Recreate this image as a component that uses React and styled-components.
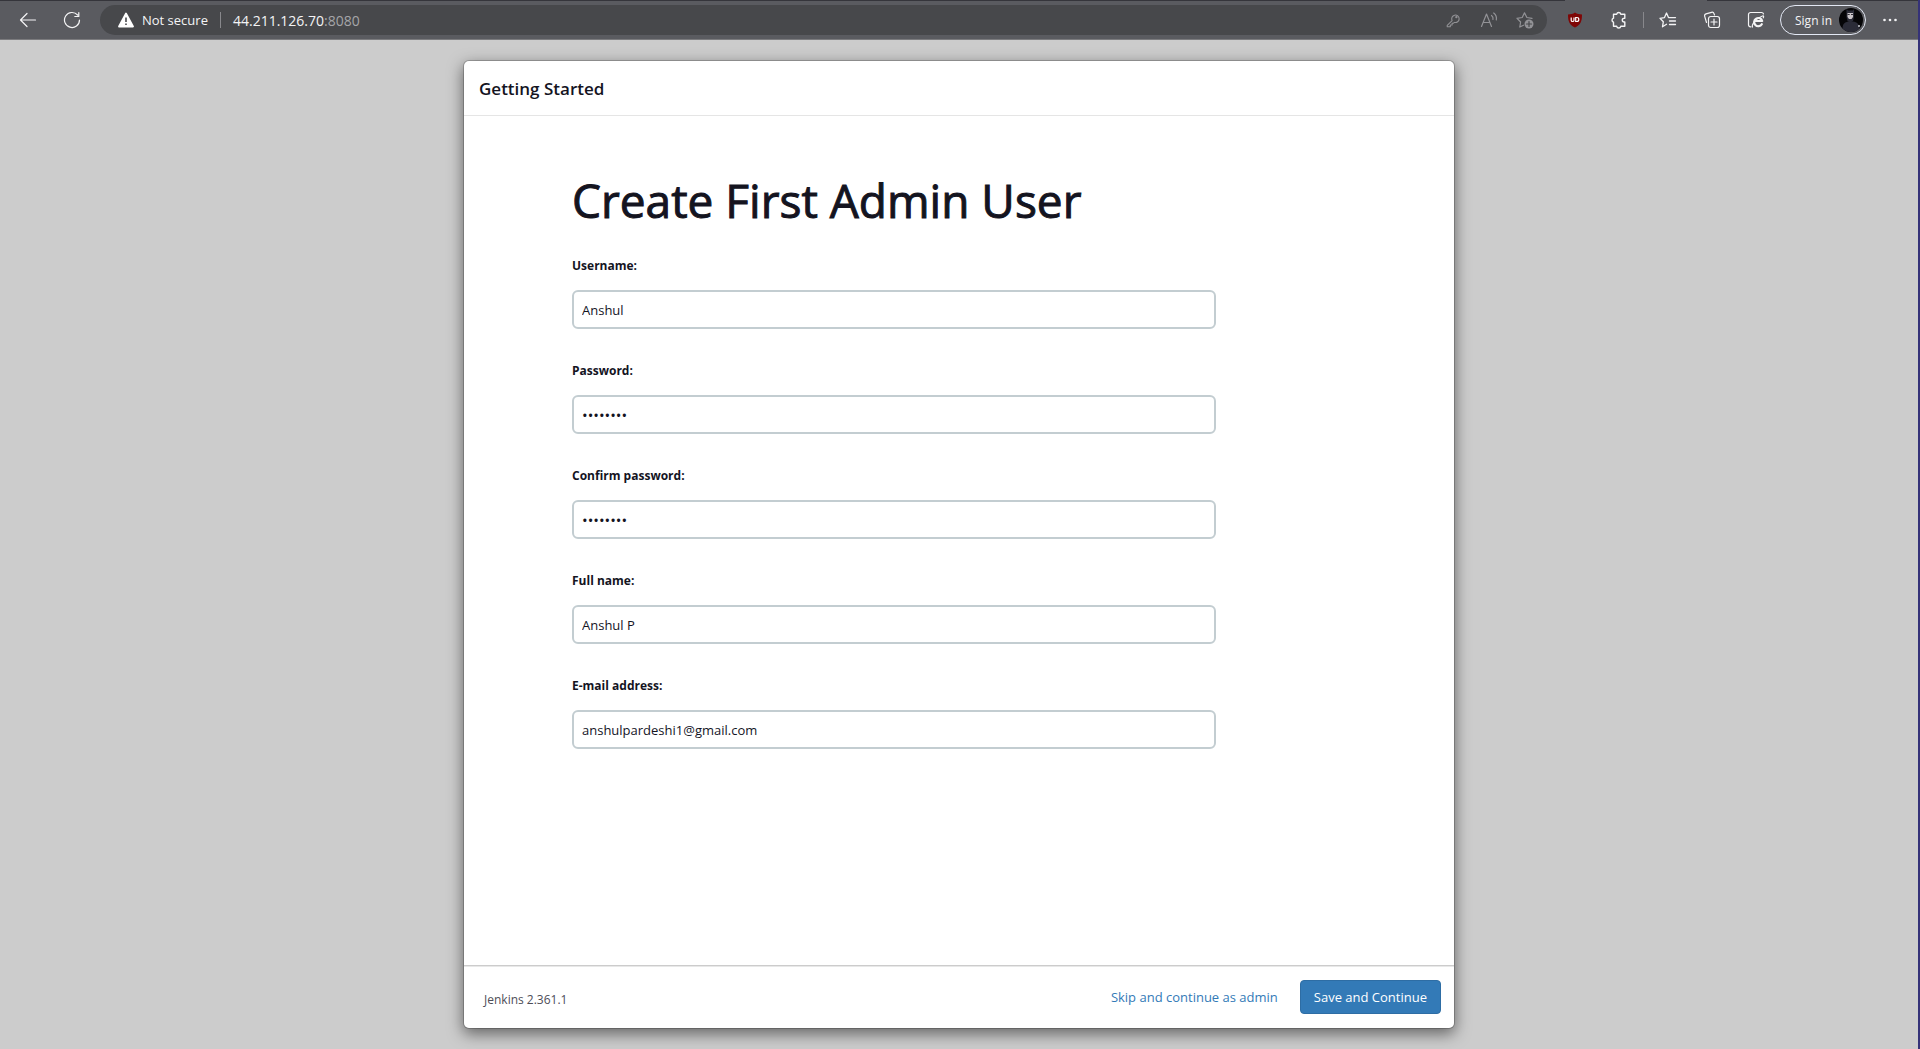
import React, { useState } from "react";
import styled, { createGlobalStyle } from "styled-components";

const GlobalStyle = createGlobalStyle`
  *, *::before, *::after { box-sizing: border-box; }
  body {
    margin: 0;
    background: #cccccc;
    color: #14141f;
    font-family: "Open Sans", "Noto Sans", sans-serif;
    font-size: 13px;
  }
  button, input { font: inherit; color: inherit; }
`;

const Shell = styled.div`
  display: flex;
  flex-direction: column;
  min-height: 100vh;
  border-right: 2px solid #353278;
`;

const TabEdge = styled.div`
  display: flex;
  justify-content: flex-end;
  height: 1px;
  background: #35353b;
`;

const ActiveTab = styled.div`
  width: 142px;
  margin-right: 211px;
  background: #5a5b60;
`;

const Toolbar = styled.header`
  display: flex;
  align-items: center;
  height: 39px;
  padding: 0 6px;
  background: #5a5b60;
  border-bottom: 1px solid #7b7b7e;
  color: #f4f4f5;
`;

const IconButton = styled.button`
  display: flex;
  flex: none;
  align-items: center;
  justify-content: center;
  width: ${(p) => (p.$narrow ? 36 : 44)}px;
  height: 30px;
  padding: 0;
  border: 0;
  background: none;
  color: ${(p) => (p.$dim ? "#929296" : "inherit")};
`;

const AddressBar = styled.div`
  display: flex;
  flex: 1;
  align-items: center;
  height: 30px;
  margin: 0 6px;
  padding: 0 4px 0 18px;
  border-radius: 15px;
  background: #47484b;
`;

const Security = styled.button`
  display: flex;
  align-items: center;
  gap: 8px;
  padding: 0;
  border: 0;
  background: none;
  white-space: nowrap;
`;

const Divider = styled.span`
  flex: none;
  width: 1px;
  height: 16px;
  margin: 0 ${(p) => p.$gap}px;
  background: #88888c;
`;

const Url = styled.span`
  flex: 1;
  font-size: 14px;
  span { color: #a5a5a8; }
`;

const Profile = styled.button`
  display: flex;
  align-items: center;
  justify-content: space-between;
  width: 86px;
  height: 30px;
  margin: 0 2px;
  padding: 0 2px 0 14px;
  border: 1px solid #e3e8f4;
  border-radius: 15px;
  background: none;
  font-size: 12px;
  white-space: nowrap;
`;

const Page = styled.main`
  display: flex;
  flex: 1;
  justify-content: center;
  padding: 20px;
`;

const Dialog = styled.section`
  display: flex;
  flex-direction: column;
  width: 100%;
  max-width: 992px;
  border: 1px solid rgba(0, 0, 0, 0.2);
  border-radius: 6px;
  background: #ffffff;
  background-clip: padding-box;
  box-shadow: 0 5px 15px rgba(0, 0, 0, 0.5);
`;

const DialogHeader = styled.div`
  padding: 16px 15px 14px;
  border-bottom: 1px solid #e5e5e5;
`;

const DialogTitle = styled.h2`
  margin: 0;
  font-size: 17px;
  font-weight: 600;
  line-height: 24px;
`;

const DialogBody = styled.form`
  flex: 1;
  padding: 56px 238px 56px 108px;
`;

const Heading = styled.h1`
  margin: 0 0 28px;
  font-size: 46px;
  font-weight: 400;
  line-height: 56px;
  -webkit-text-stroke: 1px currentColor;
`;

const Field = styled.div`
  display: flex;
  flex-direction: column;
  gap: 14px;
  margin-bottom: 32px;
`;

const Label = styled.label`
  font-size: 12px;
  font-weight: 700;
  line-height: 20px;
`;

const TextInput = styled.input`
  width: 100%;
  height: 39px;
  padding: 0 8px;
  border: 2px solid #c3cdd1;
  border-radius: 6px;
  background: #ffffff;
  outline: 0;

  &[type="password"] { font-size: 15px; }
`;

const DialogFooter = styled.div`
  display: flex;
  align-items: center;
  justify-content: space-between;
  padding: 14px 13px 14px 20px;
  border-top: 1px solid #cccccc;
  box-shadow: inset 0 1px #e8e8e8;
`;

const Version = styled.span`
  padding-top: 4px;
  color: #4d4d57;
  font-size: 12px;
`;

const Actions = styled.div`
  display: flex;
  align-items: center;
`;

const ActionButton = styled.button`
  height: 34px;
  padding: 0 13px;
  border: 1px solid ${(p) => (p.$primary ? "#2e6da4" : "transparent")};
  border-radius: 4px;
  background: ${(p) => (p.$primary ? "#337ab7" : "none")};
  color: ${(p) => (p.$primary ? "#ffffff" : "#337ab7")};
  white-space: nowrap;
  margin-left: 8px;
`;

const Icon = ({ children, size = 18 }) => (
  <svg
    width={size}
    height={size}
    viewBox="0 0 18 18"
    fill="none"
    stroke="currentColor"
    strokeWidth="1.2"
    strokeLinecap="round"
    strokeLinejoin="round"
    aria-hidden="true"
  >
    {children}
  </svg>
);

const BackIcon = () => (
  <Icon><path d="M16.5 9H1.5M8 2.5 1.5 9 8 15.5" /></Icon>
);
const ReloadIcon = () => (
  <Icon><path d="M16.5 9A7.5 7.5 0 1 1 14.6 4M15.8 1.5V5.5H11.8" /></Icon>
);
const WarningIcon = () => (
  <svg width="16" height="16" viewBox="0 0 16 16" aria-hidden="true">
    <path d="M8 1.5 15 14.5H1Z" fill="#fff" stroke="#fff" strokeWidth="1.8" strokeLinejoin="round" />
    <path d="M8 5.5v4.5M8 11.5v1.6" stroke="#47484b" strokeWidth="1.6" />
  </svg>
);
const KeyIcon = () => (
  <Icon size={16}>
    <path d="M8 9.6 2.5 15v1.5H6V14.6h2v-2h1.6l1-.9A4.2 4.2 0 1 0 8 9.6Z" />
    <circle cx="12.8" cy="5.8" r=".7" />
  </Icon>
);
const ReadAloudIcon = () => (
  <Icon>
    <path d="M1.5 15.5 6.5 3l5 12.500M3.200 11.500h6.600M11.500 4.500a4 4 0 0 1 1.500 4M13.700 2a7 7 0 0 1 2.600 6.800" />
  </Icon>
);
const AddFavoriteIcon = () => (
  <Icon>
    <path d="M7.500 14.200 3.800 16l.8-5L1 7.300l5.200-.8L8.500 1.800l2.400 4.700L16 7.300" />
    <circle cx="13" cy="13" r="4.500" fill="currentColor" stroke="none" />
    <path d="M13 10.500v5M10.500 13h5" stroke="#47484b" />
  </Icon>
);
const ShieldIcon = () => (
  <svg width="16" height="16" viewBox="0 0 16 16" aria-hidden="true">
    <path d="M8 .5c2 1.400 4.500 1.900 7 1.900 0 6.600-1.200 10.200-7 13.200-5.800-3-7-6.600-7-13.200C3.500 2.400 6 1.900 8 .5Z" fill="#7f0606" />
    <path d="M4.200 5.500v2.700q0 1.300 1.400 1.300T7 8.200V5.500M8.700 5.500v4h1.100q2 0 2-2t-2-2Z" fill="none" stroke="#fff" strokeWidth="1.200" />
  </svg>
);
const ExtensionsIcon = () => (
  <Icon>
    <path d="M3.500 3.200h3.200a2.100 2.100 0 0 1 4.100 0h4v4h-.6a1.900 1.900 0 0 0 0 3.800h.6v4.300h-4a2.100 2.100 0 0 1-4.100 0H3.500v-4.100a2.100 2.100 0 0 1 0-4Z" strokeWidth="1.400" />
  </Icon>
);
const FavoritesIcon = () => (
  <Icon>
    <path d="M7.500 13.300 3.500 15.800l.8-5L1 7.300l4.500-.7L7.500 2l2 4.600H16.500M10.500 10h6M10.500 13.500h6" strokeWidth="1.300" />
  </Icon>
);
const CollectionsIcon = () => (
  <Icon>
    <path d="M3.500 11.500 1.700 5.300a2 2 0 0 1 1.300-2.400l5.500-1.600A2 2 0 0 1 11 2.600L11.500 4" />
    <rect x="5.500" y="5.500" width="11" height="11" rx="2.200" />
    <path d="M11 8v6M8 11h6" />
  </Icon>
);
const IeModeIcon = () => (
  <Icon>
    <path d="M4 15.800H3.500a2 2 0 0 1-2-2V3.500a2 2 0 0 1 2-2h11a2 2 0 0 1 2 1.500" />
    <path d="M14.800 13.200a4.100 4.100 0 1 1 .4-3.200H8" strokeWidth="2.200" />
    <path d="M5.500 16C4.500 14 8.500 7.500 16 4.800q1 .2.300 2" />
  </Icon>
);
const MoreIcon = () => (
  <Icon>
    <g fill="currentColor" stroke="none">
      <circle cx="3.500" cy="9" r="1.300" />
      <circle cx="9" cy="9" r="1.300" />
      <circle cx="14.500" cy="9" r="1.300" />
    </g>
  </Icon>
);
const Avatar = () => (
  <svg width="24" height="24" viewBox="0 0 24 24" aria-hidden="true">
    <circle cx="12" cy="12" r="12" fill="#050507" />
    <path d="M3.500 20.500C3.500 15.500 6 14.500 9 13.500h5c4 .5 6 2.500 6.600 7A12 12 0 0 1 3.500 20.500Z" fill="#2b2c38" />
    <path d="M7.500 1l1.500 1.500h5L15 1V9l-1 4-2.500 1.500L8.500 13 7.500 9Z" fill="#2b2c38" />
    <path d="M8.500 5h5.500v4l-1.500 2h-2.500L8.500 9Z" fill="#c9c4c8" />
    <path d="M8.500 6.500h2.200M12 6.500h2" stroke="#33313a" strokeWidth="1" />
    <circle cx="20" cy="18" r="1" fill="#c9cad0" />
  </svg>
);

const initialFields = [
  { id: "username", label: "Username:", type: "text", value: "Anshul" },
  { id: "password", label: "Password:", type: "password", value: "password" },
  { id: "confirm", label: "Confirm password:", type: "password", value: "password" },
  { id: "fullname", label: "Full name:", type: "text", value: "Anshul P" },
  { id: "email", label: "E-mail address:", type: "text", value: "anshulpardeshi1@gmail.com" },
];

function BrowserBar() {
  return (
    <>
      <TabEdge><ActiveTab /></TabEdge>
      <Toolbar>
        <IconButton aria-label="Back"><BackIcon /></IconButton>
        <IconButton aria-label="Refresh"><ReloadIcon /></IconButton>
        <AddressBar>
          <Security><WarningIcon />Not secure</Security>
          <Divider $gap={12} />
          <Url>44.211.126.70<span>:8080</span></Url>
          <IconButton $narrow $dim aria-label="Saved passwords"><KeyIcon /></IconButton>
          <IconButton $narrow $dim aria-label="Read aloud"><ReadAloudIcon /></IconButton>
          <IconButton $narrow $dim aria-label="Add to favorites"><AddFavoriteIcon /></IconButton>
        </AddressBar>
        <IconButton aria-label="Ad blocker"><ShieldIcon /></IconButton>
        <IconButton aria-label="Extensions"><ExtensionsIcon /></IconButton>
        <Divider $gap={2} />
        <IconButton aria-label="Favorites"><FavoritesIcon /></IconButton>
        <IconButton aria-label="Collections"><CollectionsIcon /></IconButton>
        <IconButton aria-label="Internet Explorer mode"><IeModeIcon /></IconButton>
        <Profile>Sign in<Avatar /></Profile>
        <IconButton aria-label="More"><MoreIcon /></IconButton>
      </Toolbar>
    </>
  );
}

export default function App() {
  const [fields, setFields] = useState(initialFields);
  const update = (id, value) =>
    setFields((list) => list.map((f) => (f.id === id ? { ...f, value } : f)));

  return (
    <Shell>
      <GlobalStyle />
      <BrowserBar />
      <Page>
        <Dialog aria-labelledby="dialog-title">
          <DialogHeader>
            <DialogTitle id="dialog-title">Getting Started</DialogTitle>
          </DialogHeader>
          <DialogBody id="admin-form" onSubmit={(e) => e.preventDefault()}>
            <Heading>Create First Admin User</Heading>
            {fields.map((f) => (
              <Field key={f.id}>
                <Label htmlFor={f.id}>{f.label}</Label>
                <TextInput
                  id={f.id}
                  type={f.type}
                  value={f.value}
                  onChange={(e) => update(f.id, e.target.value)}
                />
              </Field>
            ))}
          </DialogBody>
          <DialogFooter>
            <Version>Jenkins 2.361.1</Version>
            <Actions>
              <ActionButton type="button">Skip and continue as admin</ActionButton>
              <ActionButton $primary type="submit" form="admin-form">Save and Continue</ActionButton>
            </Actions>
          </DialogFooter>
        </Dialog>
      </Page>
    </Shell>
  );
}
